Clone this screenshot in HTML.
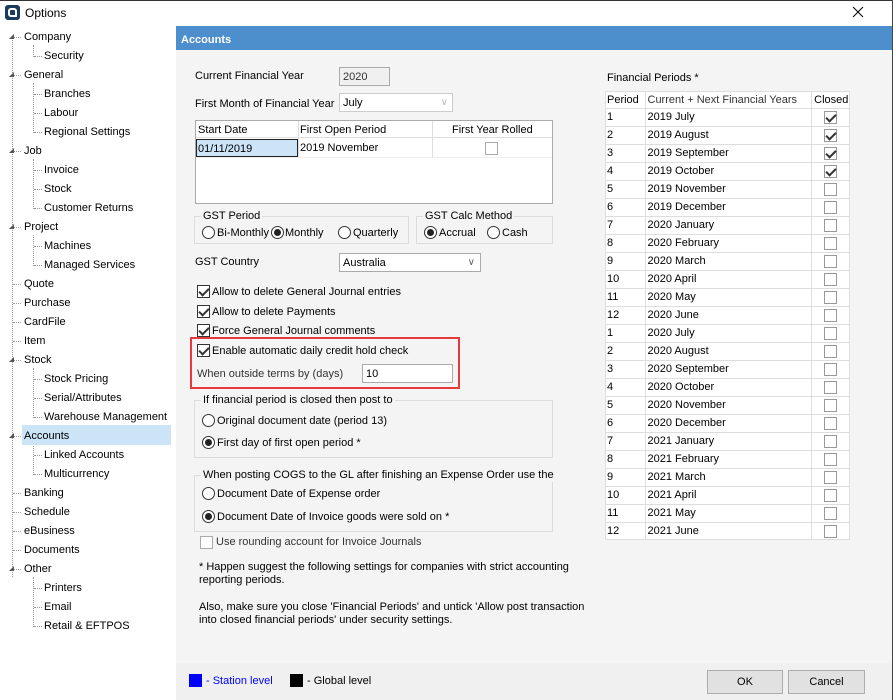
<!DOCTYPE html>
<html><head><meta charset="utf-8"><style>
*{box-sizing:border-box;margin:0;padding:0}
body{width:893px;height:700px;position:relative;overflow:hidden;background:#fff;font-family:"Liberation Sans",sans-serif;font-size:11px;color:#000}
.a{position:absolute;white-space:nowrap;line-height:14px}
.cb{position:absolute;width:13px;height:13px;border:1px solid #333;background:#fff}
.cb.g{border-color:#aaa}
.cb.k::after{content:"";position:absolute;left:3px;top:0px;width:4px;height:8px;border:solid #333;border-width:0 2px 2px 0;transform:rotate(45deg)}
.rd{position:absolute;width:13px;height:13px;border:1px solid #333;border-radius:50%;background:#fff}
.rd.on::after{content:"";position:absolute;left:2px;top:2px;width:7px;height:7px;border-radius:50%;background:#222}
.grp{position:absolute;border:1px solid #dcdcdc}
.grp .lg{position:absolute;top:-8px;left:6px;background:#f4f4f4;padding:0 2px;line-height:14px;white-space:nowrap}
.inp{position:absolute;border:1px solid #aaa;background:#fff;padding-left:3px;line-height:18px}
.tv{position:absolute;border-left:1px dotted #999;}
.th{position:absolute;border-top:1px dotted #999;width:8px}
.tri{position:absolute;width:0;height:0;border-left:5px solid transparent;border-bottom:5px solid #555}
table{border-collapse:collapse;table-layout:fixed}
td{white-space:nowrap;overflow:hidden;line-height:14px}
</style></head><body>
<div style="position:absolute;left:0;top:0;width:893px;height:1px;background:#333"></div>
<div style="position:absolute;left:892px;top:0;width:1px;height:700px;background:#444"></div>
<div style="position:absolute;left:5px;top:5px;width:15px;height:15px;background:#1c3a5c;border-radius:3px"><div style="position:absolute;left:3px;top:3px;width:9px;height:9px;border:2px solid #fff;border-radius:3px 3px 0 3px"></div></div>
<div class="a" style="left:25px;top:6px;font-size:12px">Options</div>
<svg style="position:absolute;left:852px;top:6px" width="12" height="12"><path d="M1 1L11 11M11 1L1 11" stroke="#000" stroke-width="1"/></svg>

<!-- tree -->
<div class="tv" style="left:12px;top:37px;height:540px"></div>
<div class="tv" style="left:33px;top:45px;height:12px"></div>
<div class="tv" style="left:33px;top:83px;height:50px"></div>
<div class="tv" style="left:33px;top:159px;height:50px"></div>
<div class="tv" style="left:33px;top:235px;height:31px"></div>
<div class="tv" style="left:33px;top:368px;height:50px"></div>
<div class="tv" style="left:33px;top:444px;height:31px"></div>
<div class="tv" style="left:33px;top:577px;height:50px"></div>
<div style="position:absolute;left:22px;top:425px;width:149px;height:20px;background:#cce4f7"></div>
<div id="tree"></div>

<!-- main -->
<div style="position:absolute;left:176px;top:26px;width:716px;height:24px;background:#4d8fcc"></div>
<div class="a" style="left:181px;top:33px;color:#fff;font-weight:bold;font-size:11px">Accounts</div>
<div style="position:absolute;left:176px;top:50px;width:716px;height:613px;background:#f4f4f4"></div>
<div style="position:absolute;left:176px;top:663px;width:716px;height:37px;background:#f0f0f0"></div>

<div class="a" style="left:195px;top:69px">Current Financial Year</div>
<div class="inp" style="left:339px;top:67px;width:51px;height:19px;background:#f0f0f0;color:#333">2020</div>
<div class="a" style="left:195px;top:97px">First Month of Financial Year</div>
<div class="inp" style="left:339px;top:93px;width:114px;height:19px;border-color:#ccc">July<span style="position:absolute;right:4px;top:0;color:#bbb;font-size:10px">∨</span></div>

<div style="position:absolute;left:195px;top:120px;width:358px;height:84px;border:1px solid #aaa;background:#fff"></div>
<div style="position:absolute;left:196px;top:121px;width:356px;height:17px;border-bottom:1px solid #ddd;background:#fff"></div>
<div style="position:absolute;left:298px;top:121px;width:1px;height:36px;background:#ddd"></div>
<div style="position:absolute;left:432px;top:121px;width:1px;height:36px;background:#ddd"></div>
<div style="position:absolute;left:196px;top:157px;width:356px;height:1px;background:#eee"></div>
<div class="a" style="left:198px;top:123px">Start Date</div>
<div class="a" style="left:300px;top:123px">First Open Period</div>
<div class="a" style="left:452px;top:123px">First Year Rolled</div>
<div style="position:absolute;left:196px;top:139px;width:102px;height:18px;background:#cce4f7;border:1px solid #222"></div>
<div class="a" style="left:198px;top:142px">01/11/2019</div>
<div class="a" style="left:300px;top:141px">2019 November</div>
<div class="cb g" style="left:485px;top:142px"></div>

<div class="grp" style="left:194px;top:216px;width:215px;height:28px"><span class="lg">GST Period</span></div>
<div class="rd" style="left:202px;top:226px"></div><div class="a" style="left:217px;top:226px">Bi-Monthly</div>
<div class="rd on" style="left:271px;top:226px"></div><div class="a" style="left:285px;top:226px">Monthly</div>
<div class="rd" style="left:338px;top:226px"></div><div class="a" style="left:353px;top:226px">Quarterly</div>
<div class="grp" style="left:416px;top:216px;width:137px;height:28px"><span class="lg">GST Calc Method</span></div>
<div class="rd on" style="left:424px;top:226px"></div><div class="a" style="left:439px;top:226px">Accrual</div>
<div class="rd" style="left:487px;top:226px"></div><div class="a" style="left:502px;top:226px">Cash</div>

<div class="a" style="left:195px;top:255px">GST Country</div>
<div class="inp" style="left:339px;top:253px;width:142px;height:19px">Australia<span style="position:absolute;right:5px;top:0;color:#666;font-size:10px">∨</span></div>

<div class="cb k" style="left:197px;top:285px"></div><div class="a" style="left:212px;top:285px">Allow to delete General Journal entries</div>
<div class="cb k" style="left:197px;top:305px"></div><div class="a" style="left:212px;top:305px">Allow to delete Payments</div>
<div class="cb k" style="left:197px;top:324px"></div><div class="a" style="left:212px;top:324px">Force General Journal comments</div>

<div style="position:absolute;left:190px;top:337px;width:270px;height:52px;border:2px solid #e8393d"></div>
<div class="cb k" style="left:197px;top:344px"></div><div class="a" style="left:212px;top:344px">Enable automatic daily credit hold check</div>
<div class="a" style="left:197px;top:367px;color:#333">When outside terms by (days)</div>
<div class="inp" style="left:362px;top:364px;width:91px;height:19px">10</div>

<div class="grp" style="left:194px;top:400px;width:359px;height:58px"><span class="lg">If financial period is closed then post to</span></div>
<div class="rd" style="left:202px;top:414px"></div><div class="a" style="left:217px;top:414px">Original document date (period 13)</div>
<div class="rd on" style="left:202px;top:436px"></div><div class="a" style="left:217px;top:436px">First day of first open period *</div>

<div class="grp" style="left:194px;top:475px;width:359px;height:57px"><span class="lg">When posting COGS to the GL after finishing an Expense Order use the</span></div>
<div class="rd" style="left:202px;top:487px"></div><div class="a" style="left:217px;top:487px">Document Date of Expense order</div>
<div class="rd on" style="left:202px;top:510px"></div><div class="a" style="left:217px;top:510px">Document Date of Invoice goods were sold on *</div>

<div class="cb g" style="left:200px;top:536px"></div><div class="a" style="left:216px;top:535px;color:#333">Use rounding account for Invoice Journals</div>

<div class="a" style="left:199px;top:561px;line-height:13px">* Happen suggest the following settings for companies with strict accounting<br>reporting periods.</div>
<div class="a" style="left:199px;top:601px;line-height:13px">Also, make sure you close 'Financial Periods' and untick 'Allow post transaction<br>into closed financial periods' under security settings.</div>

<div class="a" style="left:607px;top:71px">Financial Periods *</div>
<div id="fp" style="position:absolute;left:605px;top:91px;width:245px;height:449px;background:#fff;border:1px solid #ddd;overflow:hidden"></div>

<div style="position:absolute;left:189px;top:674px;width:13px;height:13px;background:#00f"></div>
<div class="a" style="left:206px;top:674px;color:#00f">- Station level</div>
<div style="position:absolute;left:290px;top:674px;width:13px;height:13px;background:#000"></div>
<div class="a" style="left:307px;top:674px">- Global level</div>
<div style="position:absolute;left:707px;top:670px;width:76px;height:24px;border:1px solid #adadad;background:#e1e1e1;text-align:center;line-height:22px">OK</div>
<div style="position:absolute;left:788px;top:670px;width:77px;height:24px;border:1px solid #adadad;background:#e1e1e1;text-align:center;line-height:22px">Cancel</div>

<script>
var items=[["Company",0,1],["Security",1],["General",0,1],["Branches",1],["Labour",1],["Regional Settings",1],["Job",0,1],["Invoice",1],["Stock",1],["Customer Returns",1],["Project",0,1],["Machines",1],["Managed Services",1],["Quote",0],["Purchase",0],["CardFile",0],["Item",0],["Stock",0,1],["Stock Pricing",1],["Serial/Attributes",1],["Warehouse Management",1],["Accounts",0,1],["Linked Accounts",1],["Multicurrency",1],["Banking",0],["Schedule",0],["eBusiness",0],["Documents",0],["Other",0,1],["Printers",1],["Email",1],["Retail & EFTPOS",1]];
var h="";items.forEach(function(it,i){var y=37+i*19;var x=it[1]?44:24;
h+='<div class="th" style="left:'+(it[1]?34:13)+'px;top:'+y+'px"></div>';
if(it[2])h+='<div class="tri" style="left:9px;top:'+(y-3)+'px"></div>';
h+='<div class="a" style="left:'+x+'px;top:'+(y-7)+'px">'+it[0].replace("&","&amp;")+'</div>';});
document.getElementById("tree").innerHTML=h;
var m=["July","August","September","October","November","December","January","February","March","April","May","June"];
var t='<table style="width:245px;font-size:11px"><colgroup><col style="width:39px"><col style="width:166px"><col style="width:40px"></colgroup>';
t+='<tr style="height:16px;border-bottom:1px solid #ddd"><td style="padding-left:1px;border-right:1px solid #ddd">Period</td><td style="padding-left:2px;border-right:1px solid #ddd;color:#333">Current + Next Financial Years</td><td style="text-align:center">Closed</td></tr>';
for(var i=0;i<24;i++){var yr=i<6?2019:(i<18?2020:2021);var c=i<4;
t+='<tr style="height:18px;border-bottom:1px solid #ddd"><td style="padding-left:1px;border-right:1px solid #ddd">'+(i%12+1)+'</td><td style="padding-left:2px;border-right:1px solid #ddd">'+yr+' '+m[i%12]+'</td><td style="position:relative"><div class="cb g'+(c?' k':'')+'" style="left:12px;top:2px;border-color:#999"></div></td></tr>';}
t+='</table>';document.getElementById("fp").innerHTML=t;
</script>
</body></html>
